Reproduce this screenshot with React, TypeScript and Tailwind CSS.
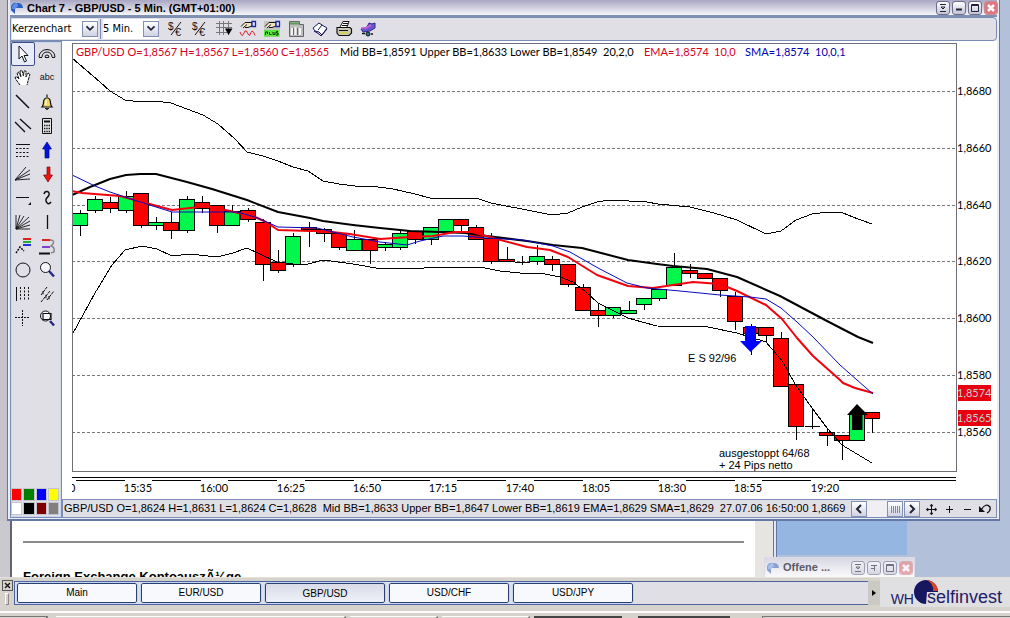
import React from 'react';

const UP = '#00f84c';
const DOWN = '#ff0000';

/* [body top, body bottom, wick top, wick bottom, direction] */
type Candle = [number, number, number, number, 'u' | 'd' | 'n'];
const candles: Candle[] = [
  [213, 225, 210, 235, 'u'], [199, 210, 196, 212, 'u'], [202, 208, 197, 212, 'd'], [196, 210, 191, 212, 'u'],
  [193, 225, 193, 227, 'd'], [222, 225, 217, 229, 'u'], [222, 230, 212, 238, 'd'], [199, 230, 196, 232, 'u'],
  [202, 208, 196, 212, 'd'], [205, 225, 205, 232, 'd'], [211, 225, 205, 225, 'u'], [210, 219, 208, 221, 'd'],
  [222, 264, 219, 280, 'd'], [262, 270, 250, 272, 'd'], [236, 264, 233, 266, 'u'], [227, 229, 222, 246, 'd'],
  [229, 233, 228, 241, 'd'], [233, 247, 232, 249, 'd'], [239, 250, 230, 250, 'u'], [239, 250, 239, 263, 'd'],
  [244, 247, 242, 250, 'u'], [233, 247, 230, 249, 'u'], [231, 239, 231, 243, 'd'], [227, 239, 227, 244, 'u'],
  [219, 231, 219, 231, 'u'], [219, 225, 219, 231, 'd'], [227, 239, 225, 239, 'd'], [238, 261, 233, 263, 'd'],
  [259, 261, 247, 261, 'd'], [262, 262, 256, 264, 'n'], [256, 261, 245, 264, 'u'], [259, 264, 256, 270, 'd'],
  [264, 284, 264, 286, 'd'], [287, 310, 284, 310, 'd'], [310, 315, 303, 326, 'd'], [307, 315, 307, 317, 'u'],
  [310, 313, 301, 313, 'u'], [298, 304, 298, 309, 'u'], [289, 298, 289, 300, 'u'], [267, 285, 253, 285, 'u'],
  [270, 273, 264, 277, 'd'], [273, 278, 273, 278, 'd'], [278, 290, 278, 296, 'd'], [296, 321, 292, 329, 'd'],
  [327, 333, 324, 354, 'd'], [327, 335, 327, 341, 'd'], [338, 386, 332, 386, 'd'], [384, 426, 384, 439, 'd'],
  [426, 426, 409, 428, 'n'], [432, 435, 429, 445, 'd'], [435, 440, 435, 459, 'd'], [414, 440, 414, 440, 'u'],
  [412, 418, 412, 432, 'd'],
];

const upperBand = '72,58 86,70 100,82 110,91 125,100 140,102 155,101 171,103 187,109 203,115 218,124 235,139 247,152 263,156 278,161 293,167 308,171 323,181 339,184 355,186 371,186 393,189 415,194 430,198 476,198 491,203 506,206 522,209 537,212 552,215 568,213 582,207 597,202 610,200 647,202 658,204 690,207 714,213 737,220 766,234 781,231 796,220 812,214 828,212 843,213 858,219 872,224';
const midBand = '72,195 90,187 110,179 126,175 140,174 156,174 187,182 212,189 247,200 278,212 310,218 323,221 353,225 380,228 410,231 440,232 465,233 487,236 527,241 553,245 582,248 605,254 628,260 657,264 673,266 707,269 737,277 780,296 827,321 858,337 873,343';
const lowerBand = '72,335 95,293 112,265 125,250 142,246 157,249 172,256 190,254 217,257 233,253 247,248 260,254 277,262 293,264 308,264 323,260 353,264 382,269 403,268 417,269 432,267 480,267 500,271 520,273 545,274 560,277 573,282 585,291 598,303 610,309 628,318 642,322 657,326 708,327 737,333 766,342 783,362 795,384 812,408 827,428 842,445 872,463';
const ema = '72,191 82,193 120,196 142,202 172,210 190,208 207,206 230,211 255,217 266,222 278,230 310,231 323,231 350,234 380,239 410,237 433,236 455,232 472,232 493,238 527,247 550,250 568,257 597,275 628,286 653,288 680,284 693,282 720,284 737,291 766,305 782,319 797,338 813,356 840,380 843,383 855,388 873,393';
const sma = '72,175 95,186 110,192 137,201 172,212 237,212 255,217 278,227 317,228 353,237 380,242 407,245 420,241 443,236 463,236 487,238 523,240 553,246 570,252 598,268 627,283 647,288 680,291 720,295 750,297 766,299 781,308 797,322 813,337 840,365 857,380 873,394';

const priceLevels: [number, string][] = [
  [91, '1,8680'], [148, '1,8660'], [205, '1,8640'], [261, '1,8620'], [318, '1,8600'], [375, '1,8580'], [432, '1,8560'],
];
const times = ['15:35', '16:00', '16:25', '16:50', '17:15', '17:40', '18:05', '18:30', '18:55', '19:20'];
const timeX = (i: number) => 138 + Math.round(i * 76.3);

function PriceChart() {
  return (
    <svg
      viewBox="62 41 935 458"
      className="block h-auto w-full bg-white font-['Lato',sans-serif] text-[11px]"
      role="img"
      aria-label="GBP/USD candlestick chart"
    >
      <defs>
        <clipPath id="plot"><rect x="73" y="45" width="883" height="426" /></clipPath>
        <clipPath id="axis"><rect x="72" y="480" width="100" height="18" /></clipPath>
      </defs>
      <g shapeRendering="crispEdges" fill="none" stroke="#6e6e76">
        {priceLevels.map(([y]) => (
          <path key={y} d={`M72 ${y + 0.5}H956`} strokeDasharray="3 2" stroke="#77777c" />
        ))}
        <path d="M72.500 43.500H956.500V471.500H72.500Z" />
      </g>
      <g clipPath="url(#plot)" fill="none" strokeLinejoin="round">
        {candles.map(([top, bottom, high, low, kind], i) => {
          const cx = Math.round(80 + i * 15.24);
          return (
            <g key={i} shapeRendering="crispEdges" stroke="#000">
              <path d={`M${cx + 0.5} ${high}V${low + 1}`} />
              {kind === 'n' ? (
                <path d={`M${cx - 7} ${top + 0.5}H${cx + 8}`} />
              ) : (
                <rect x={cx - 7.5} y={top + 0.5} width="15" height={bottom - top} fill={kind === 'u' ? UP : DOWN} />
              )}
            </g>
          );
        })}
        <g shapeRendering="crispEdges" stroke="#000">
          <polyline points={upperBand} />
          <polyline points={lowerBand} />
        </g>
        <polyline points={midBand} stroke="#000" strokeWidth="2" />
        <polyline points={ema} stroke="#f4000c" strokeWidth="2" />
        <polyline points={sma} stroke="#0808c0" strokeWidth="1" />
      </g>
      <path d="M745 326H756V341H762L750.500 352L740 341H745Z" fill="#0000ff" />
      <path d="M857 404L868 415H862.500V430H852V415H847Z" fill="#000" />

      <g fill="#d8001c">
        <text x="76" y="56">GBP/USD O=1,8567 H=1,8567 L=1,8560 C=1,8565</text>
        <text x="644" y="56">EMA=1,8574</text>
        <text x="714" y="56">10,0</text>
      </g>
      <text x="340" y="56">Mid BB=1,8591 Upper BB=1,8633 Lower BB=1,8549</text>
      <text x="603" y="56">20,2,0</text>
      <g fill="#0000b4">
        <text x="745" y="56">SMA=1,8574</text>
        <text x="815" y="56">10,0,1</text>
      </g>

      <g className="font-['Liberation_Sans',sans-serif]">
        <text x="688" y="362">E S 92/96</text>
        <text x="719" y="457">ausgestoppt 64/68</text>
        <text x="719" y="469">+ 24 Pips netto</text>
      </g>

      {priceLevels.map(([y, label]) => (
        <text key={label} x="957" y={y + 4}>{label}</text>
      ))}
      <rect x="958" y="385" width="33" height="16" fill="#e80010" />
      <rect x="958" y="410" width="33" height="16" fill="#e80010" />
      <text x="957" y="397" fill="#b9d8d2">1,8574</text>
      <text x="957" y="422" fill="#b9d8d2">1,8565</text>

      <g shapeRendering="crispEdges" stroke="#000">
        <path d="M72 477.500H956" />
        <path d="M76 480.500H125" />
        {times.map((t, i) => (
          <path key={t} d={`M${timeX(i) + 14} 480.5H${i === 9 ? 956 : timeX(i) + 63}`} />
        ))}
      </g>
      <text x="47" y="492" clipPath="url(#axis)">15:10</text>
      {times.map((t, i) => (
        <text key={t} x={timeX(i)} y="492" textAnchor="middle">{t}</text>
      ))}
    </svg>
  );
}

const I = ({ children, size = 18 }: { children: React.ReactNode; size?: number }) => (
  <svg width={size} height={size} viewBox="0 0 18 18" fill="none" stroke="#111" aria-hidden="true" className="block shrink-0">
    {children}
  </svg>
);

const tools: [string, React.ReactNode][] = [
  ['Select', <path d="M5 1V14L8 11L10.500 17L12.500 16L10 10.500H14Z" fill="#fff" />],
  ['Arcs', <g><path d="M1 12A8 7.500 0 0 1 17 12M4 12A5 5 0 0 1 14 12M7 12A2 2 0 0 1 11 12" /><path d="M1 12.500H4M7 12.500H11M14 12.500H17" /></g>],
  ['Pan', <path d="M6 16L2 10.500L1 8L3 8L5 10L3 4L4.500 3L7 8L6 2L8 1.500L9.500 7L10 2L12 2L12 8L14 4L16 5L14 12L13 16" fill="#fff" strokeDasharray="3 .6" />],
  ['Text', <text x="9" y="11" fontSize="9" textAnchor="middle" fill="#111" stroke="none" fontFamily="Liberation Sans">abc</text>],
  ['Line', <path d="M2 2L15 15" strokeWidth="1.500" />],
  ['Alarm', <g><path d="M9 1.500V4M4 14C6 12 5 10 6 7C7 4 11 4 12 7C13 10 12 12 14 14Z" fill="#f2d36a" strokeWidth="1.200" /><path d="M7 15Q9 18 11 15" fill="#333" /><path d="M8 7V12" stroke="#fff6c0" strokeWidth="1.500" /></g>],
  ['Parallel lines', <path d="M1 5L11 15M6 2L17 12" strokeWidth="1.400" />],
  ['Calculator', <g><path d="M4.500 1.500H13.500V16.500H4.500Z" fill="#e4e4e4" /><path d="M6 4.500H12" strokeWidth="2" /><path d="M6 8.500H12M6 11.500H12M6 14.500H12" strokeWidth="1.500" strokeDasharray="1.400 .9" /></g>],
  ['Horizontal grid', <g><path d="M2 3.500H16" /><path d="M2 7.500H16M2 11.500H16M2 15.500H16" strokeDasharray="2 1.500" /></g>],
  ['Up arrow', <path d="M9 1L13.500 8H11V17H7V8H4.500Z" fill="#0010e8" stroke="#001070" strokeWidth=".7" />],
  ['Fan', <path d="M1 15L12 2M1 15L16 5M1 15L16 9M1 15L16 14" strokeWidth=".9" />],
  ['Down arrow', <path d="M9 17L13.500 10H11V2H8V10H4.500Z" fill="#f01010" stroke="#701010" strokeWidth=".7" transform="translate(1 0)" />],
  ['Horizontal line', <g><path d="M2 8.500H15" /><path d="M17 13V16H14Z" fill="#111" stroke="none" /></g>],
  ['Curve', <path d="M6 5C7 1 12 2 11 6C10 9 7 9 8 12C9 15 11 16 13 13" strokeWidth="1.500" />],
  ['Gann fan', <path d="M2 2V16H16M2 16L6 2M2 16L10 3M2 16L15 4M2 16L16 8M2 16L16 12" strokeWidth=".9" />],
  ['Vertical line', <path d="M9.500 2V16" strokeWidth="1.300" />],
  ['Fibonacci', <g><path d="M9 2H17" stroke="#e02020" strokeWidth="2" /><path d="M9 5H17" stroke="#20b030" strokeWidth="2" /><path d="M9 8H17" stroke="#2030e0" strokeWidth="2" /><path d="M2 16L6 10L10 14" strokeDasharray="2 1" strokeWidth="1.500" /></g>],
  ['Cycles', <g><path d="M4 3H12" stroke="#e02020" strokeWidth="2" /><path d="M4 10H12" stroke="#8040d0" strokeWidth="2" /><path d="M1 16.500H12" strokeWidth="2" /><path d="M12 3Q17 3 15 7L13 9Q17 10 16 15L13 16" stroke="#888" strokeWidth="1.500" /></g>],
  ['Ellipse', <circle cx="9" cy="9" r="7" />],
  ['Zoom', <g><circle cx="7.500" cy="6.500" r="5" fill="#f6f6ff" /><path d="M11 10L16 15.500" stroke="#28288a" strokeWidth="2.500" /></g>],
  ['Vertical grid', <g><path d="M2.500 2V16" /><path d="M6.500 2V16M10.500 2V16M14.500 2V16" strokeDasharray="2 1.500" /></g>],
  ['Channels', <path d="M3 10L9 2M3 17L12 6M9 15L16 6M5 6V10M8 10V14M11 11V15" strokeDasharray="3 .7" />],
  ['Crosshair', <path d="M8.500 1V17M1 8.500H16" strokeDasharray="2 1" />],
  ['Zoom area', <g><circle cx="7.500" cy="7" r="5" fill="#f6f6ff" /><path d="M5 4.500H13V10.500H5Z" strokeWidth="1.200" /><path d="M12 12L16 16.500" stroke="#28288a" strokeWidth="2.500" /></g>],
];

const Money = () => (
  <g>
    <text x="1" y="10" fontSize="10" fill="#111" stroke="none" fontFamily="Liberation Sans">$</text>
    <text x="8" y="16" fontSize="11" fill="#111" stroke="none" fontFamily="Liberation Sans">€</text>
    <path d="M4 15L14 2" />
  </g>
);

const hand = (
  <g>
    <path d="M2 6.500L6 2.500H13V6L9 7.500H6" fill="#f3e2c4" stroke="#111" />
    <path d="M8 4.500L4 8" />
    <path d="M13 1.500H16.500V6.500H13Z" fill="#dfe4ff" stroke="#1828a0" strokeWidth="1.300" />
  </g>
);
const actions: [string, React.ReactNode][] = [
  ['Buy', <Money />],
  ['Sell', <Money />],
  ['Grid', <g><path d="M4.500 1V15M8.500 1V15M13.500 1V15M1 3.500H17M1 7.500H17M1 12.500H12" stroke="#777" /><path d="M10 8.500H17.500L13.500 15Z" fill="#000" stroke="none" /></g>],
  ['Indicators', <g>{hand}<path d="M1 12L2 14.500L3.500 15.500L5 13L6 11L7.500 11L9 14L10.500 15.500L12 12.500L13 11L14.500 12L16 15.500" stroke="#e02030" /></g>],
  ['Signals', <g><path d="M1 1H17V17H1Z" fill="#c4c4c4" stroke="none" />{hand}<path d="M1 10H16V16.500H1Z" fill="#56e838" stroke="none" /><path d="M2.500 15V12H4.500V14M6.500 12V14.500H8.500M10 12V14.500H12V12M15 11.500H13.500V13H15V15H13" stroke="#0a300a" /></g>],
  ['Copy', <g><path d="M2.500 1.500H12.500V4.500H16.500V16.500H2.500Z" stroke="#666" fill="#bdbdbd" /><path d="M3 3.500H12" stroke="#5a9a5a" strokeWidth="2" /><path d="M5 8V15M8.500 7V15M13 8V15" stroke="#f4f4f4" strokeWidth="2" /><path d="M6.500 8V15M10.500 8V15" stroke="#666" /></g>],
  ['Help', <g><path d="M2 8L8 3L11 5L16 8L11 15L8 12L4 11Z" fill="#fff" stroke="#15155c" /><path d="M3 11L8 14L10 16L16 9M11 5L7 10" stroke="#15155c" /></g>],
  ['Print', <g><path d="M5 7L8 1.500H14L12 7" fill="#fff" /><path d="M2 7.500H15L16.500 9V13L14 15.500H4L2 13Z" fill="#c9c9b4" strokeWidth="1.200" /><path d="M8 3.500H13M7 5.500H12M4 10.500H13" /><path d="M5 13H13" stroke="#d8d040" strokeWidth="1.500" /></g>],
  ['Share', <g><path d="M2 9L8 7L10 3L13 4L16 3L16 8L11 11L4 12Z" fill="#6a58d0" stroke="#2a2a90" /><path d="M2 8L7 8L12 5" stroke="#d060d8" strokeWidth="1.600" /><circle cx="9" cy="14" r="2" fill="#2878a8" /><path d="M3 13.500H6M12 14H14" strokeWidth="1.500" /></g>],
];

function Emblem({ pale = false }: { pale?: boolean }) {
  return (
    <svg width="12" height="12" viewBox="0 0 12 12" aria-hidden="true" className="shrink-0">
      <path d="M6 1A5 5 0 0 0 2 10L4 12V6H12A5 5 0 0 0 6 1Z" fill={pale ? '#8ba0cf' : '#2f5fc4'} />
      <path d="M6 1A5 5 0 0 0 1 7H4L7 4Z" fill={pale ? '#a9c0ea' : '#5b8fe8'} />
    </svg>
  );
}

const glyphs: Record<string, string> = {
  Shade: 'M3 2.500H9M3 9.500H9M4 5H8L6 7Z',
  Minimize: 'M3 7.500H9',
  Pin: 'M3 3.500H9M6.500 3V9M3 6.500H6',
  Maximize: 'M2.500 2.500H9.500V9.500H2.500ZM2.500 3.500H9.500',
  Close: 'M3 3L9 9M9 3L3 9',
};

function WindowButtons({ names, pale = false }: { names: string[]; pale?: boolean }) {
  return (
    <div className={pale ? 'flex gap-1 opacity-60' : 'flex gap-1'}>
      {names.map((name) => (
        <button
          key={name}
          type="button"
          aria-label={name}
          className={
            name === 'Close'
              ? 'size-3 rounded-xs bg-[#e0767c] text-white outline outline-[#c98d95]'
              : 'size-3 rounded-xs bg-gradient-to-b from-white to-[#c3c3d6] text-[#22223a] outline outline-[#6e6e8c]'
          }
        >
          <svg width="12" height="12" viewBox="0 0 12 12" fill="none" stroke="currentColor" strokeWidth={name === 'Close' ? 2.5 : name === 'Minimize' ? 2 : 1} aria-hidden="true">
            <path d={glyphs[name]} />
          </svg>
        </button>
      ))}
    </div>
  );
}

function Dropdown({ label, value, width }: { label: string; value: string; width: string }) {
  return (
    <label className={`relative flex h-5 items-center bg-white ${width}`}>
      <select aria-label={label} className="h-5 w-full appearance-none bg-transparent outline-none" defaultValue={value}>
        <option>{value}</option>
      </select>
      <svg width="16" height="16" viewBox="0 0 16 16" fill="none" aria-hidden="true" className="pointer-events-none absolute right-0 top-0.5 border border-[#8390b4] bg-gradient-to-b from-white to-[#cfd2e2]">
        <path d="M4 5L8 9L12 5" stroke="#222238" strokeWidth="2" />
      </svg>
    </label>
  );
}

const swatches = ['bg-[#ff0000]', 'bg-[#008000]', 'bg-[#0000ff]', 'bg-[#ffff00]', 'bg-white', 'bg-black', 'bg-[#800000]', 'bg-[#808080]'];
const swatchNames = ['Red', 'Green', 'Blue', 'Yellow', 'White', 'Black', 'Maroon', 'Gray'];

function Toolbox() {
  return (
    <div className="flex w-[52px] shrink-0 flex-col justify-between border border-[#7c8db5] bg-[#e0dfe6] shadow-[inset_0_0_0_1px_#c9d6ee]">
      <div className="grid grid-cols-[24px_24px]">
        {tools.map(([name, icon], i) => (
          <button
            key={name}
            type="button"
            aria-label={name}
            className={
              i === 0
                ? 'flex h-6 items-center justify-center rounded-xs border border-[#3d4f86] bg-[#e8ecf8]'
                : 'flex h-6 items-center justify-center'
            }
          >
            <I>{icon}</I>
          </button>
        ))}
      </div>
      <div className="mr-0.5 grid grid-cols-4 gap-px pb-0.5">
        {swatches.map((c, i) => (
          <button key={c} type="button" aria-label={swatchNames[i]} className={`h-[13px] border border-[#c4c4cc] ${c}`} />
        ))}
      </div>
    </div>
  );
}

function StatusBar() {
  const box = 'flex h-4 w-4 items-center justify-center border border-[#8390b4] bg-gradient-to-b from-white to-[#d0d3e2]';
  return (
    <div className="flex h-[19px] items-center justify-between border border-[#7c8db5] bg-[#e0dfe6] pl-px pr-1">
      <p className="whitespace-pre font-['Liberation_Sans',sans-serif]">
        GBP/USD O=1,8624 H=1,8631 L=1,8624 C=1,8628  Mid BB=1,8633 Upper BB=1,8647 Lower BB=1,8619 EMA=1,8629 SMA=1,8629  27.07.06 16:50:00 1,8669
      </p>
      <div className="flex shrink-0 items-center">
        <div className="flex bg-[#f0f0f4]">
          <button type="button" aria-label="Scroll left" className={box}>
            <svg width="12" height="12" viewBox="0 0 12 12" fill="none" stroke="#222238" strokeWidth="2"><path d="M8 2L4 6L8 10" /></svg>
          </button>
          <button type="button" aria-label="Scroll position" className={`ml-5 mr-px ${box}`}>
            <svg width="12" height="12" viewBox="0 0 12 12" fill="none" stroke="#7888b8"><path d="M2.500 3V10M4.500 3V10M6.500 3V10M8.500 3V10M10.500 3V10" /></svg>
          </button>
          <button type="button" aria-label="Scroll right" className={box}>
            <svg width="12" height="12" viewBox="0 0 12 12" fill="none" stroke="#222238" strokeWidth="2"><path d="M4 2L8 6L4 10" /></svg>
          </button>
        </div>
        <div className="ml-1 flex gap-1">
          <button type="button" aria-label="Move">
            <svg width="14" height="14" viewBox="0 0 14 14" stroke="#111" fill="#111"><path d="M7.500 3V12M3 7.500H12" /><path d="M7.500 2L9 4H6ZM7.500 13L9 11H6ZM2 7.500L4 6V9ZM13 7.500L11 6V9Z" strokeWidth=".5" /></svg>
          </button>
          <button type="button" aria-label="Zoom in">
            <svg width="14" height="14" viewBox="0 0 14 14" stroke="#111"><path d="M7.500 4V11M4 7.500H11" /></svg>
          </button>
          <button type="button" aria-label="Zoom out">
            <svg width="14" height="14" viewBox="0 0 14 14" stroke="#111"><path d="M4 7.500H11" /></svg>
          </button>
          <button type="button" aria-label="Undo">
            <svg width="14" height="14" viewBox="0 0 14 14" fill="none" stroke="#111"><path d="M3 8Q8 0 12 5Q13 9 9 11" strokeWidth="1.300" /><path d="M1 4V10H7Z" fill="#111" stroke="none" /></svg>
          </button>
        </div>
      </div>
    </div>
  );
}

function ChartWindow() {
  return (
    <section className="ml-[7px] mr-[10px] border-x border-b-2 border-[#6478a6] bg-[#e9edf6] px-0.5 pb-px">
      <header className="flex h-[17px] items-center justify-between border-b-2 border-[#7f90b2] bg-gradient-to-b from-[#a9a7c3] to-[#f6f6fa] pl-px">
        <h1 className="flex items-center gap-1 font-['Liberation_Sans',sans-serif] text-[11px] font-bold leading-4">
          <Emblem />
          Chart 7 - GBP/USD - 5 Min. (GMT+01:00)
        </h1>
        <WindowButtons names={['Shade', 'Minimize', 'Maximize', 'Close']} />
      </header>
      <div className="flex h-6 items-center rounded-r-sm border border-[#7c8db5] bg-[#e0dfe6] pl-px">
        <Dropdown label="Chart type" value="Kerzenchart" width="w-[86px]" />
        <span className="mx-0.5 h-5 w-px bg-[#7c8db5]" />
        <Dropdown label="Interval" value="5 Min." width="w-14" />
        <div className="ml-2 flex gap-1.5">
          {actions.map(([name, icon]) => (
            <button key={name} type="button" aria-label={name}>
              <I>{icon}</I>
            </button>
          ))}
        </div>
      </div>
      <div className="flex">
        <Toolbox />
        <div className="flex min-w-0 flex-1 flex-col">
          <PriceChart />
          <StatusBar />
        </div>
      </div>
    </section>
  );
}

function Backdrop() {
  return (
    <div className="relative flex flex-1">
      <div className="w-3 border-r-2 border-[#5f6372] bg-[#cac9cf]" />
      <article className="flex min-h-14 min-w-0 flex-1 flex-col overflow-hidden bg-white px-[11px] pt-5">
        <hr className="border-t-2 border-[#8a8a8a]" />
        <div className="mt-[26px] h-2 overflow-hidden">
          <h2 className="font-['Liberation_Sans',sans-serif] text-[13px] font-bold leading-4">Foreign Exchange KontoauszÃ¼ge</h2>
        </div>
      </article>
      <div className="flex w-[255px] bg-[#b3c0d9]">
        <div className="w-[18px] bg-[#e6e5e2]" />
        <div className="w-1 border-x border-[#5f77a8] bg-[#dfe7f5]" />
        <div className="h-[34px] w-[130px] bg-[#94b6e1]" />
      </div>
      <section className="absolute bottom-0 right-[95px] flex h-5 w-[151px] items-center justify-between border border-b-0 border-[#dcdce8] bg-gradient-to-b from-[#d8d8e4] to-[#fafafc] px-0.5">
        <h2 className="flex items-center gap-1 font-['Liberation_Sans',sans-serif] text-[11px] font-bold text-[#5c5c66]">
          <Emblem pale />
          Offene ...
        </h2>
        <WindowButtons names={['Shade', 'Pin', 'Maximize', 'Close']} pale />
      </section>
    </div>
  );
}

function TabBar() {
  const tabs = ['Main', 'EUR/USD', 'GBP/USD', 'USD/CHF', 'USD/JPY'];
  return (
    <nav className="flex h-[34px] shrink-0 items-center border-t border-[#e4e1da] bg-[#d6d3cd] pb-1 font-['Liberation_Sans',sans-serif] text-[10px]">
      <div className="flex w-[14px] flex-col items-center gap-0.5">
        <button type="button" aria-label="Close bar" className="size-[11px] border border-[#555] bg-[#d6d3cd]">
          <svg width="9" height="9" viewBox="0 0 9 9" stroke="#111" strokeWidth="1.300"><path d="M2 2L7 7M7 2L2 7" /></svg>
        </button>
        <span className="h-3 w-1 border border-l-white border-t-white border-[#8a8a8a]" />
      </div>
      <div className="flex h-6 min-w-0 flex-1 items-center gap-1 border-y border-l border-[#4e62a0] bg-[#e0dfe6] px-0.5">
        {tabs.map((t) => (
          <button
            key={t}
            type="button"
            className={
              t === 'GBP/USD'
                ? 'h-5 w-[120px] rounded-xs border border-[#27406f] bg-gradient-to-b from-[#d9dce8] to-[#eef1f8] pt-0.5 outline outline-[#c4d6f2]'
                : 'h-5 w-[120px] rounded-xs border border-[#27406f] bg-[#f7f9fc] outline outline-[#c4d6f2]'
            }
          >
            {t}
          </button>
        ))}
      </div>
      <button type="button" aria-label="More tabs" className="flex h-6 w-3 items-center justify-center bg-[#cbc9c3]">
        <svg width="4" height="6" viewBox="0 0 4 6"><path d="M0 0L4 3L0 6Z" fill="#000" /></svg>
      </button>
      <div className="flex h-[29px] w-[130px] items-end justify-end bg-[#e0dfe2] pr-2 text-[#20206a]">
        <span className="text-[14px] leading-4">WH</span>
        <svg width="25" height="28" viewBox="0 0 25 28" aria-hidden="true" className="-mr-3 shrink-0">
          <path d="M12 1A12 12 0 1 0 12 25L13 13H24A12 12 0 0 0 12 1Z" fill="#17175f" />
          <path d="M12 1A12 12 0 0 1 24 12H19A10 10 0 0 0 12 1Z" fill="#d8432c" />
        </svg>
        <span className="text-[18px] leading-5">selfinvest</span>
      </div>
    </nav>
  );
}

export default function App() {
  return (
    <main className="flex min-h-screen flex-col overflow-hidden bg-[#b3c0d9] font-['DejaVu_Sans_Condensed','DejaVu_Sans',sans-serif] text-[11px] text-black">
      <div className="flex flex-1 flex-col bg-gradient-to-r from-[#c6c4ca] from-[7px] to-[#b3c0d9] to-[7px]">
        <ChartWindow />
        <Backdrop />
      </div>
      <TabBar />
      <footer className="flex h-2 shrink-0 items-end gap-1 border-t-2 border-white bg-[#d6d3cd]">
        <span className="h-[3px] w-12 border-r-2 border-t border-[#777]" />
        <span className="ml-1 h-[3px] w-[290px] border-r-2 border-t border-r-[#777] border-t-white" />
        <span className="h-[3px] w-[88px] border-r-2 border-t border-r-[#777] border-t-white" />
        <span className="h-[3px] w-[88px] border-r-2 border-t border-r-[#777] border-t-white" />
        <span className="h-[3px] w-[88px] border-t-2 border-[#444]" />
        <span className="ml-3 h-[3px] w-[92px] border-t-2 border-[#444]" />
        <span className="ml-7 h-[3px] flex-1 border-l border-t border-[#777]" />
      </footer>
    </main>
  );
}
